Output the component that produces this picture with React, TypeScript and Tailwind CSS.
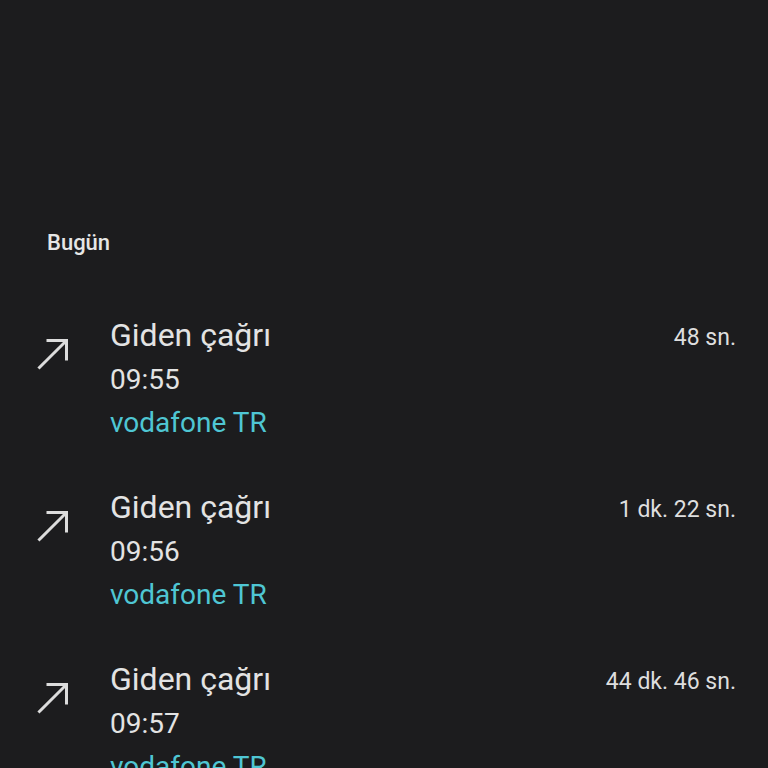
import React from 'react';

type Call = {
  id: number;
  label: string;
  time: string;
  carrier: string;
  duration: string;
};

const calls: Call[] = [
  { id: 1, label: 'Giden çağrı', time: '09:55', carrier: 'vodafone TR', duration: '48 sn.' },
  { id: 2, label: 'Giden çağrı', time: '09:56', carrier: 'vodafone TR', duration: '1 dk. 22 sn.' },
  { id: 3, label: 'Giden çağrı', time: '09:57', carrier: 'vodafone TR', duration: '44 dk. 46 sn.' },
];

// outgoing call arrow (call_made)
const OutgoingIcon: React.FC = () => (
  <svg width="36" height="36" viewBox="0 0 36 36" fill="none" className="block">
    <path d="M12 5.5H30.5V24" stroke="#dcdcdc" strokeWidth="3" strokeLinecap="square" />
    <path d="M30 6L3.5 32.5" stroke="#dcdcdc" strokeWidth="3" strokeLinecap="square" />
  </svg>
);

const App: React.FC = () => {
  return (
    <div
      className="w-[768px] h-[768px] overflow-hidden bg-[#1c1c1e] text-[#e3e3e3]"
      style={{ fontFamily: 'Roboto, "Noto Sans", sans-serif' }}
    >
      <div className="pt-[229px] pl-[47px]">
        <h2 className="text-[22px] leading-[28px] font-medium text-[#e6e6e6]">Bugün</h2>
      </div>

      <ul className="mt-[58px]">
        {calls.map((call) => (
          <li key={call.id} className="flex items-start pr-[32px] mb-[43px]">
            <div className="w-[110px] shrink-0 pl-[36px] pt-[20px]">
              <OutgoingIcon />
            </div>
            <div className="flex-1 min-w-0">
              <div className="text-[32px] leading-[43px] -mt-[1px] mb-[1px]">{call.label}</div>
              <div className="text-[28px] leading-[43px]">{call.time}</div>
              <div className="text-[28px] leading-[43px] text-[#4fc6d3]">{call.carrier}</div>
            </div>
            <div className="text-[23px] leading-[43px] pt-[1px] text-[#dedede] whitespace-nowrap">
              {call.duration}
            </div>
          </li>
        ))}
      </ul>
    </div>
  );
};

export default App;
